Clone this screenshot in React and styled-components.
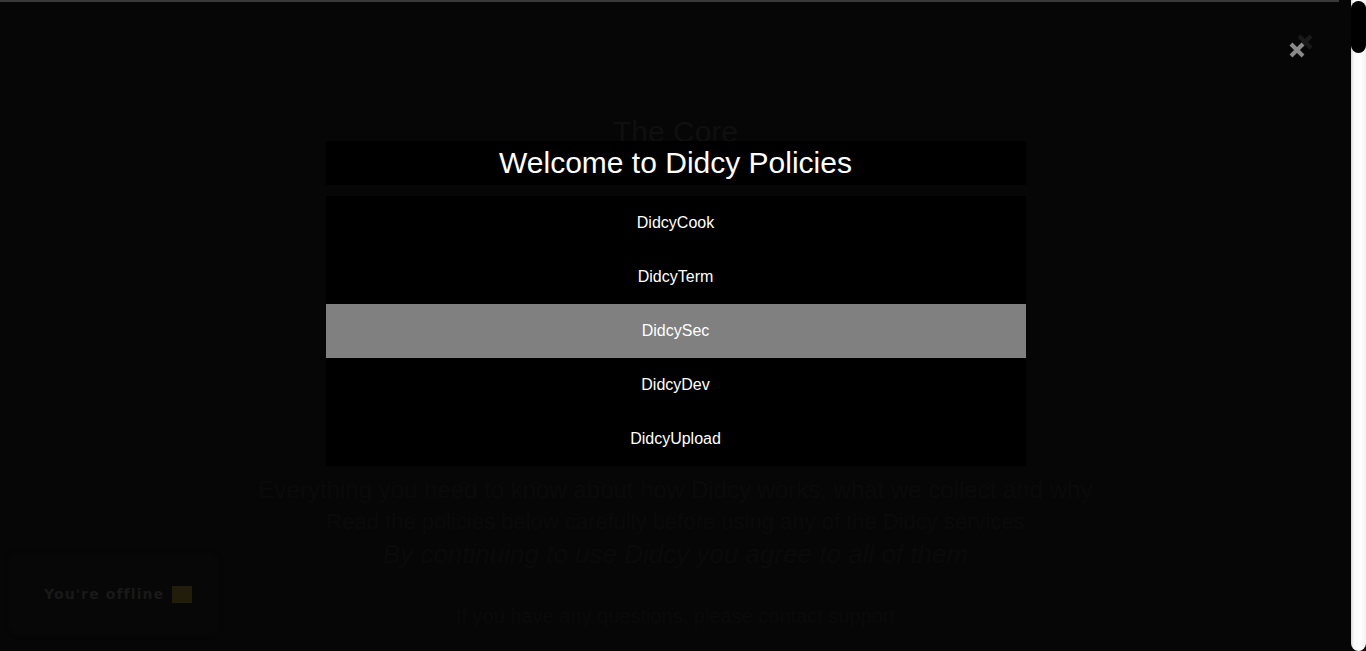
import React from "react";
import styled, { createGlobalStyle } from "styled-components";

const GlobalStyle = createGlobalStyle`
  html, body {
    margin: 0;
    padding: 0;
    background: #060606;
    font-family: "Liberation Sans", Arial, sans-serif;
    overflow: hidden;
  }
`;

const Window = styled.div`
  height: 100vh;
  display: flex;
`;

const Viewport = styled.div`
  position: relative;
  flex: 1;
  overflow: hidden;
  background: #060606;
`;

const ScrollTrack = styled.div`
  width: 15px;
  height: 100%;
  background: linear-gradient(90deg, #d8d8d8 0, #fbfbfb 3px, #ffffff 60%, #f2f2f2 100%);
  border-radius: 0 0 8px 8px;
`;

const ScrollThumb = styled.div`
  height: 52px;
  margin-top: 1px;
  background: #000;
  border-radius: 8px;
`;

const TopLine = styled.div`
  height: 2px;
  margin-right: 12px;
  background: #3a3a3a;
`;

const CoreTitle = styled.h1`
  margin: 113px 0 0;
  text-align: center;
  font-weight: normal;
  font-size: 30px;
  color: #0f0f0f;
`;

const Paragraph = styled.p`
  margin: ${(p) => p.$top}px auto 0;
  width: ${(p) => p.$width}px;
  font-size: ${(p) => p.$size}px;
  line-height: 1.2;
  color: #0a0a0a;
  text-align: center;
  font-style: ${(p) => (p.$italic ? "italic" : "normal")};
`;

const Toast = styled.div`
  position: absolute;
  left: 12px;
  bottom: 19px;
  width: 204px;
  height: 76px;
  display: flex;
  align-items: center;
  gap: 8px;
  padding-left: 32px;
  box-sizing: border-box;
  background: #070707;
  border-radius: 4px;
  box-shadow: 0 0 6px #0b0b0b;
`;

const ToastText = styled.span`
  font-family: "DejaVu Sans", sans-serif;
  font-weight: bold;
  font-size: 14px;
  letter-spacing: 1.1px;
  color: #191919;
`;

const ToastIcon = styled.span`
  width: 20px;
  height: 17px;
  background: #221d0b;
`;

const Overlay = styled.div`
  position: absolute;
  inset: 0;
  display: flex;
  flex-direction: column;
  align-items: center;
  padding-top: 141px;
  box-sizing: border-box;
`;

const CloseButton = styled.button`
  position: absolute;
  top: 30px;
  right: 33px;
  width: 30px;
  height: 30px;
  padding: 0;
  border: none;
  background: transparent;
  cursor: pointer;
`;

const Header = styled.div`
  width: 700px;
  height: 44px;
  display: flex;
  align-items: center;
  justify-content: center;
  background: #000;
  color: #fff;
  font-size: 30px;
`;

const List = styled.ul`
  width: 700px;
  margin: 11px 0 0;
  padding: 0;
  list-style: none;
  background: #000;
`;

const Item = styled.li`
  height: 54px;
  display: flex;
  align-items: center;
  justify-content: center;
  font-size: 16px;
  color: #fff;
  background: ${(p) => (p.$active ? "#808080" : "#000")};
  cursor: pointer;
`;

const policies = ["DidcyCook", "DidcyTerm", "DidcySec", "DidcyDev", "DidcyUpload"];

const CloseIcon = () => (
  <svg width="30" height="30" viewBox="0 0 30 30">
    <g stroke="#1a1a1a" strokeWidth="4">
      <path d="M11 6 L23 18" />
      <path d="M23 6 L11 18" />
    </g>
    <g stroke="#8a8a8a" strokeWidth="4">
      <path d="M3 14 L15 26" />
      <path d="M15 14 L3 26" />
    </g>
  </svg>
);

export default function App() {
  return (
    <>
      <GlobalStyle />
      <Window>
        <Viewport>
          <TopLine />
          <CoreTitle>The Core</CoreTitle>
          <Paragraph $top={327} $width={1030} $size={24}>
            Everything you need to know about how Didcy works, what we collect and why
          </Paragraph>
          <Paragraph $top={4} $width={1030} $size={22}>
            Read the policies below carefully before using any of the Didcy services
          </Paragraph>
          <Paragraph $top={4} $width={930} $size={26} $italic>
            By continuing to use Didcy you agree to all of them
          </Paragraph>
          <Paragraph $top={34} $width={640} $size={20}>
            If you have any questions, please contact support
          </Paragraph>
          <Toast>
            <ToastText>You're offline</ToastText>
            <ToastIcon />
          </Toast>
          <Overlay>
            <CloseButton aria-label="Close">
              <CloseIcon />
            </CloseButton>
            <Header>Welcome to Didcy Policies</Header>
            <List>
              {policies.map((name) => (
                <Item key={name} $active={name === "DidcySec"}>
                  {name}
                </Item>
              ))}
            </List>
          </Overlay>
        </Viewport>
        <ScrollTrack>
          <ScrollThumb />
        </ScrollTrack>
      </Window>
    </>
  );
}
